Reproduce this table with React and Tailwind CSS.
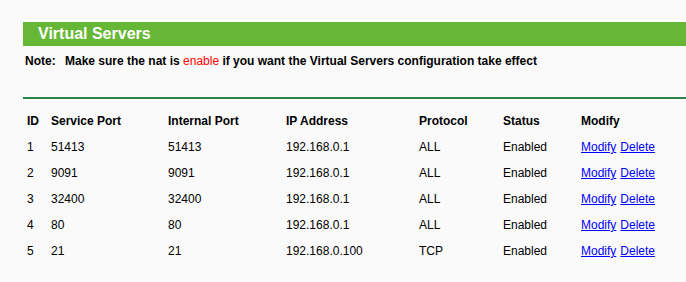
const rows = [
  { id: 1, sp: '51413', ip: '51413', addr: '192.168.0.1', proto: 'ALL' },
  { id: 2, sp: '9091', ip: '9091', addr: '192.168.0.1', proto: 'ALL' },
  { id: 3, sp: '32400', ip: '32400', addr: '192.168.0.1', proto: 'ALL' },
  { id: 4, sp: '80', ip: '80', addr: '192.168.0.1', proto: 'ALL' },
  { id: 5, sp: '21', ip: '21', addr: '192.168.0.100', proto: 'TCP' },
]

const cols = 'grid grid-cols-[24px_117px_118px_133px_84px_78px_1fr] items-center h-[26px]'

export default function App() {
  return (
    <div className="w-[686px] h-[282px] bg-[#fafafa] pl-[23px] pt-[22px] text-[12px] text-black font-['Liberation_Sans',Arial,sans-serif] overflow-hidden">
      {/* Title bar */}
      <div className="h-[24px] bg-[#66b735] pl-[15px] flex items-center">
        <span className="text-white font-bold text-[16px]">Virtual Servers</span>
      </div>

      {/* Note */}
      <div className="flex items-center h-[30px] pl-[2px] font-bold">
        <span className="w-[40px]">Note:</span>
        <span>
          Make sure the nat is <span className="text-[#ff0000] font-normal">enable</span> if you want the Virtual Servers configuration take effect
        </span>
      </div>

      <div className="mt-[21px] border-t-2 border-[#2e8049]" />

      {/* Table */}
      <div className="mt-[9px] pl-[4px]">
        <div className={`${cols} font-bold`}>
          <span>ID</span>
          <span>Service Port</span>
          <span>Internal Port</span>
          <span>IP Address</span>
          <span>Protocol</span>
          <span>Status</span>
          <span>Modify</span>
        </div>
        {rows.map((r) => (
          <div key={r.id} className={cols}>
            <span>{r.id}</span>
            <span>{r.sp}</span>
            <span>{r.ip}</span>
            <span>{r.addr}</span>
            <span>{r.proto}</span>
            <span>Enabled</span>
            <span className="flex gap-[4px]">
              <a href="#" className="text-[#0000ff] underline">Modify</a>
              <a href="#" className="text-[#0000ff] underline">Delete</a>
            </span>
          </div>
        ))}
      </div>
    </div>
  )
}
